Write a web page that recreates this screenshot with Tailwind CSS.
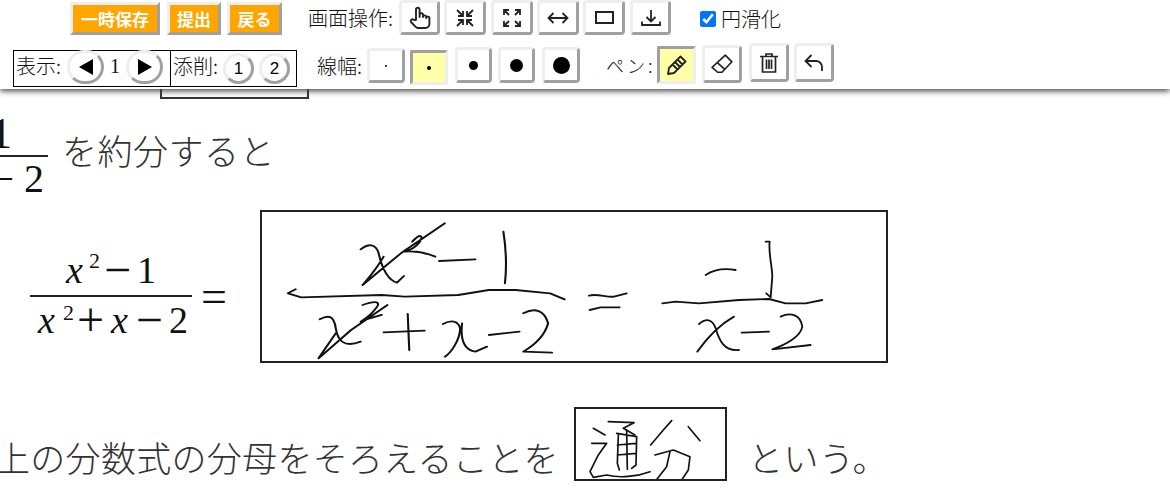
<!DOCTYPE html>
<html lang="ja">
<head>
  <meta charset="UTF-8">
  <title>添削</title>
  <script src="https://cdn.jsdelivr.net/npm/@tailwindcss/browser@4"></script>
</head>
<body class="bg-white text-[#222] w-[1170px] h-[489px] overflow-hidden font-['Noto_Sans_CJK_JP',sans-serif]">

  <!-- Toolbar -->
  <header class="relative z-10 h-[89px] bg-white shadow-[0_2px_6px_#444]">
    <div class="flex items-start h-[43px]">
      <button class="ml-[70px] mt-[2px] w-[90px] h-[33px] bg-[#ffa500] border-[3px] border-[#eee] border-r-[#a0a0a0] border-b-[#a0a0a0] text-white font-bold text-[17px] leading-none">一時保存</button>
      <button class="ml-[7px] mt-[2px] w-[54px] h-[33px] bg-[#ffa500] border-[3px] border-[#eee] border-r-[#a0a0a0] border-b-[#a0a0a0] text-white font-bold text-[17px] leading-none">提出</button>
      <button class="ml-[6px] mt-[2px] w-[55px] h-[33px] bg-[#ffa500] border-[3px] border-[#eee] border-r-[#a0a0a0] border-b-[#a0a0a0] text-white font-bold text-[17px] leading-none">戻る</button>

      <span class="ml-[26px] mt-[4px] w-[85px] text-[20px] leading-[27px] font-light text-[#111] whitespace-nowrap">画面操作:</span>

      <button class="ml-[6px] w-[41px] h-[35px] flex items-center justify-center rounded-[4px] border-[3px] border-[#eee] border-r-[#a0a0a0] border-b-[#a0a0a0] bg-white">
        <svg class="w-[22px] h-[24px]" viewBox="0 0 22 24" fill="none" stroke="#222" stroke-width="1.900" stroke-linejoin="round" stroke-linecap="round"><path d="M7 14V3.500a1.800 1.800 0 0 1 3.600 0V11l0-2a1.700 1.700 0 0 1 3.400 0v2a1.600 1.600 0 0 1 3.200 0v1a1.600 1.600 0 0 1 3.200.5V18a4 4 0 0 1-4 4H9a3 3 0 0 1-2.400-1.200L2 16a1.800 1.800 0 0 1 2.700-2.300z"/></svg>
      </button>
      <button class="ml-[4px] w-[42px] h-[35px] flex items-center justify-center rounded-[4px] border-[3px] border-[#eee] border-r-[#a0a0a0] border-b-[#a0a0a0] bg-white">
        <svg class="w-[20px] h-[20px]" viewBox="0 0 20 20" fill="none" stroke="#222" stroke-width="1.800"><path d="M2 2l5 5M8 3v5H3M18 2l-5 5M12 3v5h5M2 18l5-5M8 17v-5H3M18 18l-5-5M12 17v-5h5"/></svg>
      </button>
      <button class="ml-[5px] w-[42px] h-[35px] flex items-center justify-center rounded-[4px] border-[3px] border-[#eee] border-r-[#a0a0a0] border-b-[#a0a0a0] bg-white">
        <svg class="w-[20px] h-[20px]" viewBox="0 0 20 20" fill="none" stroke="#222" stroke-width="1.800"><path d="M2 2l5 5M2 7V2h5M18 2l-5 5M18 7V2h-5M2 18l5-5M2 13v5h5M18 18l-5-5M18 13v5h-5"/></svg>
      </button>
      <button class="ml-[4px] w-[42px] h-[35px] flex items-center justify-center rounded-[4px] border-[3px] border-[#eee] border-r-[#a0a0a0] border-b-[#a0a0a0] bg-white">
        <svg class="w-[22px] h-[14px]" viewBox="0 0 22 14" fill="none" stroke="#222" stroke-width="1.800"><path d="M2 7h18M6.500 2L1.500 7l5 5M15.500 2l5 5-5 5"/></svg>
      </button>
      <button class="ml-[4px] w-[42px] h-[35px] flex items-center justify-center rounded-[4px] border-[3px] border-[#eee] border-r-[#a0a0a0] border-b-[#a0a0a0] bg-white">
        <span class="block w-[19px] h-[13px] border-2 border-[#222]"></span>
      </button>
      <button class="ml-[5px] w-[41px] h-[35px] flex items-center justify-center rounded-[4px] border-[3px] border-[#eee] border-r-[#a0a0a0] border-b-[#a0a0a0] bg-white">
        <svg class="w-[20px] h-[20px]" viewBox="0 0 20 20" fill="none" stroke="#222" stroke-width="1.800"><path d="M10 2v11M5.500 9l4.500 4.500L14.500 9M1 13.500v3.500h18v-3.500"/></svg>
      </button>

      <label class="ml-[29px] mt-[5px] flex items-center text-[20px] leading-[27px] font-light text-[#111]">
        <input type="checkbox" checked class="w-[16px] h-[16px] mr-[5px] accent-[#0075ff]">円滑化
      </label>
    </div>

    <div class="flex items-start h-[46px]">
      <div class="ml-[13px] mt-[7px] w-[158px] h-[37px] border border-black flex items-start">
        <span class="ml-[2px] w-[45px] text-[20px] leading-[30px] font-light text-[#111] whitespace-nowrap">表示:</span>
        <button class="-mt-[1px] ml-[6px] w-[37px] h-[34px] rounded-full flex items-center justify-center border-[3px] border-[#eee] border-r-[#a0a0a0] border-b-[#a0a0a0]">
          <svg class="w-[14px] h-[16px]" viewBox="0 0 14 16"><path d="M0 8L14 0v16z" fill="#000"/></svg>
        </button>
        <span class="w-[22px] text-center text-[20px] leading-[30px] font-['Liberation_Serif',serif] text-[#111]">1</span>
        <button class="-mt-[1px] w-[37px] h-[34px] rounded-full flex items-center justify-center border-[3px] border-[#eee] border-r-[#a0a0a0] border-b-[#a0a0a0]">
          <svg class="w-[14px] h-[16px]" viewBox="0 0 14 16"><path d="M14 8L0 0v16z" fill="#000"/></svg>
        </button>
      </div>
      <div class="-ml-px mt-[7px] w-[127px] h-[37px] border border-black flex items-start">
        <span class="ml-[2px] w-[45px] text-[20px] leading-[30px] font-light text-[#111] whitespace-nowrap">添削:</span>
        <button class="mt-[2px] ml-[5px] w-[31px] h-[31px] rounded-full border-[3px] border-[#eee] border-r-[#a0a0a0] border-b-[#a0a0a0] text-[17px] leading-none font-['Liberation_Sans',sans-serif] text-black">1</button>
        <button class="mt-[2px] ml-[5px] w-[31px] h-[31px] rounded-full border-[3px] border-[#eee] border-r-[#a0a0a0] border-b-[#a0a0a0] text-[17px] leading-none font-['Liberation_Sans',sans-serif] text-black">2</button>
      </div>

      <span class="ml-[20px] mt-[9px] w-[45px] text-[20px] leading-[27px] font-light text-[#111] whitespace-nowrap">線幅:</span>

      <button class="ml-[5px] mt-[5px] w-[38px] h-[35px] flex items-center justify-center rounded-[4px] border-[3px] border-[#eee] border-r-[#a0a0a0] border-b-[#a0a0a0] bg-white">
        <span class="block w-[2px] h-[2px] rounded-full bg-black"></span>
      </button>
      <button class="ml-[5px] mt-[7px] w-[38px] h-[35px] flex items-center justify-center rounded-[2px] border-[3px] border-[#eee] border-t-[#a0a0a0] border-l-[#a0a0a0] bg-[#ffffa8]">
        <span class="block w-[4px] h-[4px] rounded-full bg-black"></span>
      </button>
      <button class="ml-[7px] mt-[4px] w-[37px] h-[36px] flex items-center justify-center rounded-[4px] border-[3px] border-[#eee] border-r-[#a0a0a0] border-b-[#a0a0a0] bg-white">
        <span class="block w-[9px] h-[9px] rounded-full bg-black"></span>
      </button>
      <button class="ml-[6px] mt-[4px] w-[37px] h-[36px] flex items-center justify-center rounded-[4px] border-[3px] border-[#eee] border-r-[#a0a0a0] border-b-[#a0a0a0] bg-white">
        <span class="block w-[13px] h-[13px] rounded-full bg-black"></span>
      </button>
      <button class="ml-[7px] mt-[4px] w-[38px] h-[36px] flex items-center justify-center rounded-[4px] border-[3px] border-[#eee] border-r-[#a0a0a0] border-b-[#a0a0a0] bg-white">
        <span class="block w-[17px] h-[17px] rounded-full bg-black"></span>
      </button>

      <span class="ml-[26px] mt-[9px] w-[45px] text-[18px] leading-[27px] font-light text-[#111] tracking-[3px] whitespace-nowrap">ペン:</span>

      <button class="ml-[6px] mt-[3px] w-[39px] h-[38px] flex items-center justify-center rounded-[2px] border-[3px] border-[#eee] border-t-[#a0a0a0] border-l-[#a0a0a0] bg-[#ffffa8]">
        <svg class="w-[20px] h-[20px]" viewBox="0 0 20 20" fill="none" stroke="#222" stroke-width="1.800" stroke-linejoin="round"><path d="M13.500 1.500l5 5L7 18l-6 1 1-6zM10.500 4.500l5 5M8 7l5 5M5.500 9.500l5 5"/></svg>
      </button>
      <button class="ml-[6px] mt-[2px] w-[40px] h-[38px] flex items-center justify-center rounded-[4px] border-[3px] border-[#eee] border-r-[#a0a0a0] border-b-[#a0a0a0] bg-white">
        <svg class="w-[22px] h-[20px]" viewBox="0 0 20 18" fill="none" stroke="#222" stroke-width="1.500" stroke-linejoin="round"><path d="M13 1l6 6-9 9.500H6L1 12zM5.500 7.500L12 13.500"/></svg>
      </button>
      <button class="ml-[7px] w-[40px] h-[39px] flex items-center justify-center rounded-[4px] border-[3px] border-[#eee] border-r-[#a0a0a0] border-b-[#a0a0a0] bg-white">
        <svg class="w-[18px] h-[20px]" viewBox="0 0 18 20" fill="none" stroke="#222" stroke-width="1.700"><path d="M0 3.500h18M6 3.500V1h6v2.500M2.500 3.500V19h13V3.500M6.500 6.500V16M9 6.500V16M11.500 6.500V16"/></svg>
      </button>
      <button class="ml-[5px] w-[40px] h-[39px] flex items-center justify-center rounded-[4px] border-[3px] border-[#eee] border-r-[#a0a0a0] border-b-[#a0a0a0] bg-white">
        <svg class="w-[20px] h-[18px]" viewBox="0 0 20 18" fill="none" stroke="#222" stroke-width="1.800"><path d="M7.500 1L1.500 7l6 6M1.500 7H12a6 6 0 0 1 6 6v4"/></svg>
      </button>
    </div>
  </header>

  <main>
    <!-- bottom edge of the answer box scrolled under the toolbar -->
    <div class="ml-[160px] w-[149px] h-[10px] border-x-2 border-b-2 border-[#333]"></div>

    <div class="flex items-center h-[111px] text-[35px] font-light leading-none">
      <div class="-ml-[60px] w-[108px] font-['Liberation_Serif',serif] font-normal text-[#111]">
        <div class="h-[42px] text-[44px] leading-[42px] text-right pr-[36px]">1</div>
        <div class="h-[2px] bg-[#222]"></div>
        <div class="h-[40px] text-[40px] leading-[44px] text-right pr-[4px]">− 2</div>
      </div>
      <span class="ml-[14px] -mt-[10px] tracking-[.5px] whitespace-nowrap text-[#333]">を約分すると</span>
    </div>

    <div class="flex items-start">
      <div class="ml-[30px] mt-[44px] w-[162px] font-['Liberation_Serif',serif] text-[38px] text-[#111] whitespace-nowrap">
        <div class="h-[41px] pl-[36px] leading-[32px]"><i>x</i><sup class="text-[22px] ml-[6px] -top-[15px]">2</sup><span class="relative top-[3px] ml-[4px] text-[48px] leading-[0]">−</span><span class="ml-[6px]">1</span></div>
        <div class="h-[2px] bg-[#222]"></div>
        <div class="h-[40px] pl-[8px] leading-[46px]"><i>x</i><sup class="text-[22px] ml-[8px] -top-[13px]">2</sup><span class="relative top-[3px] ml-[3px] text-[48px] leading-[0]">+</span><i class="ml-[7px]">x</i><span class="relative top-[3px] ml-[8px] text-[48px] leading-[0]">−</span><span class="ml-[6px]">2</span></div>
      </div>
      <span class="ml-[9px] mt-[64px] font-['Liberation_Serif',serif] text-[46px] leading-none text-[#111]">=</span>

      <div class="ml-[33px] w-[628px] h-[153px] border-2 border-[#222]">
        <svg class="w-full h-full" viewBox="263 212 624 149" fill="none" stroke="#111" stroke-linecap="round" stroke-linejoin="round">
          <g transform="translate(0 200) scale(.3827 .3333)" stroke-width="5.500">
            <path d="M945 148C965 130 985 130 992 160C1000 200 1015 240 1040 248L1058 228M1005 170C985 210 965 235 950 255M1165 70L1050 160L950 255M1080 125C1100 100 1110 105 1100 125C1090 140 1075 150 1060 155C1090 152 1115 158 1140 170M1150 183L1245 178M1318 95C1328 170 1326 210 1322 250"/>
            <path d="M775 268L755 280L790 292L1000 285L1060 290L1200 285L1280 270L1350 270L1440 280L1478 298"/>
            <path d="M838 358C860 345 875 345 880 385C885 420 900 445 945 425M880 400L835 475M1015 315L920 390L835 475M950 315C985 300 1000 305 985 325C975 340 960 355 945 365C965 355 985 350 1000 345"/>
            <path d="M1005 397L1112 392M1068 342L1072 450M1160 372C1180 360 1200 360 1205 385C1205 420 1180 460 1165 470M1210 370C1205 420 1215 450 1245 455L1275 440M1280 405L1360 395M1370 340C1400 322 1425 330 1435 370C1425 410 1400 435 1370 455L1445 458"/>
          </g>
          <g transform="translate(560 200) scale(.3333)" stroke-width="5.500">
            <path d="M90 287C115 280 140 292 165 290L203 280M92 330L125 322L182 322M440 225C470 205 500 205 530 210M620 125L632 125C628 160 640 200 640 230L635 292L622 280"/>
            <path d="M310 310L350 305L420 310L540 300L630 297L680 310L740 310L790 300"/>
            <path d="M420 372C440 355 460 355 470 385C480 420 495 455 540 450M525 350C480 375 440 420 415 455M548 398L630 395M665 350C695 335 725 345 730 380C725 410 680 435 640 448L755 435"/>
          </g>
        </svg>
      </div>
    </div>

    <div class="-ml-[5px] mt-[44px] flex items-start text-[35px] leading-none font-light text-[#333] whitespace-nowrap">
      <span class="mt-[32px] w-[579px] tracking-[.3px]">上の分数式の分母をそろえることを</span>
      <div class="w-[153px] h-[74px] border-2 border-[#222]">
        <svg class="w-full h-full" viewBox="0 0 149 70" fill="none" stroke="#111" stroke-linecap="round" stroke-linejoin="round">
          <g transform="translate(-16 -9) scale(.3333)" stroke-width="5">
            <path d="M145 65L222 68L190 85L225 105M100 85L135 105M95 130L140 130L115 165L90 215L100 232L140 225C180 235 230 230 270 215"/>
            <path d="M170 100L230 110L228 195L215 205M175 105L172 190L178 210M172 135L228 130M172 165L228 160M200 90L202 208"/>
            <path d="M335 62L310 90L272 135M385 80L420 122M285 165L340 150L390 170L385 210L365 240M330 155L320 200L285 245"/>
          </g>
        </svg>
      </div>
      <span class="ml-[21px] mt-[32px] tracking-[.5px]">という。</span>
    </div>
  </main>

</body>
</html>
